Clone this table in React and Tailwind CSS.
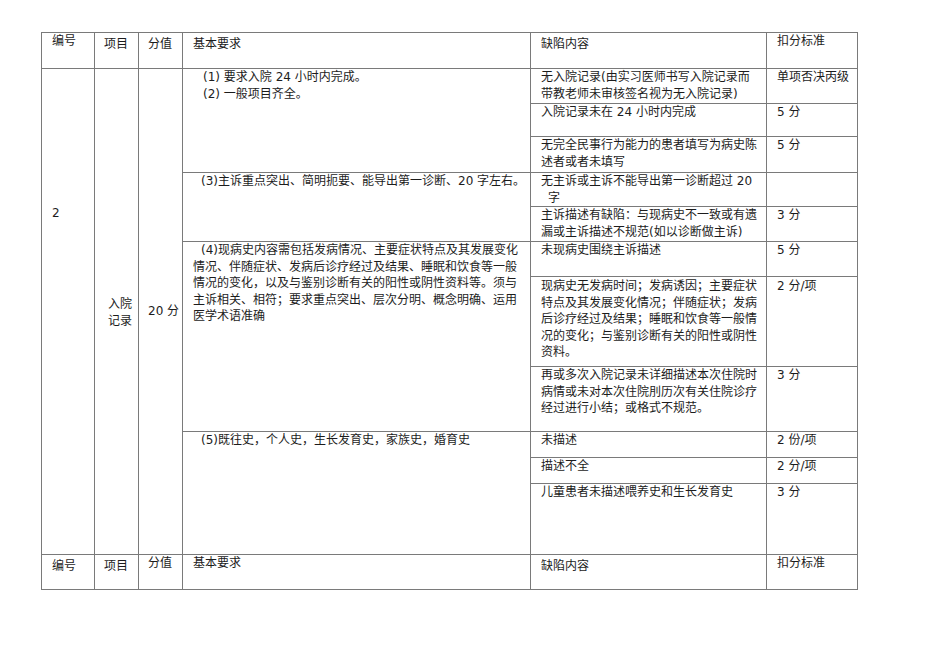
const Cell = ({ className = '', children }) => (
  <div className={`bg-white leading-[16.5px] ${className}`}>{children}</div>
)

const Lines = ({ lines, className = '' }) => (
  <div className={className}>
    {lines.map((l, i) => (
      <div key={i} className="whitespace-nowrap">{l}</div>
    ))}
  </div>
)

export default function App() {
  return (
    <div className="min-h-[672px] w-[950px] bg-white pl-[41px] pt-[32px] font-['DejaVu_Sans','Noto_Sans_CJK_SC',sans-serif] text-[12px] text-[#1c1c1c]">
      <div className="grid w-max grid-cols-[52px_43px_43px_347px_235px_90px] grid-rows-[35px_34px_32px_35px_33px_34px_34px_89px_64px_25px_25px_70px_34px] gap-px bg-[#7a7a7a] p-px">
        {/* header */}
        <Cell className="col-start-1 row-start-1 pl-[10px]">编号</Cell>
        <Cell className="col-start-2 row-start-1 pl-[9px] pt-[3px]">项目</Cell>
        <Cell className="col-start-3 row-start-1 pl-[9px] pt-[3px]">分值</Cell>
        <Cell className="col-start-4 row-start-1 pl-[10px] pt-[3px]">基本要求</Cell>
        <Cell className="col-start-5 row-start-1 pl-[10px] pt-[3px]">缺陷内容</Cell>
        <Cell className="col-start-6 row-start-1 pl-[10px]">扣分标准</Cell>

        {/* left spanning columns */}
        <Cell className="col-start-1 row-start-2 row-span-11 pl-[10px] pt-[136px]">2</Cell>
        <Cell className="col-start-2 row-start-2 row-span-11 flex items-center pl-[13px]">
          <Lines lines={['入院', '记录']} className="pt-[2px]" />
        </Cell>
        <Cell className="col-start-3 row-start-2 row-span-11 flex items-center pl-[9px]">20 分</Cell>

        {/* 基本要求 */}
        <Cell className="col-start-4 row-start-2 row-span-3 pl-[20px]">
          <Lines lines={['(1) 要求入院 24 小时内完成。', '(2) 一般项目齐全。']} />
        </Cell>
        <Cell className="col-start-4 row-start-5 row-span-2 pl-[18px]">(3)主诉重点突出、简明扼要、能导出第一诊断、20 字左右。</Cell>
        <Cell className="col-start-4 row-start-7 row-span-3 pl-[10px]">
          <Lines
            lines={[
              <span className="pl-[8px]">(4)现病史内容需包括发病情况、主要症状特点及其发展变化</span>,
              '情况、伴随症状、发病后诊疗经过及结果、睡眠和饮食等一般',
              '情况的变化，以及与鉴别诊断有关的阳性或阴性资料等。须与',
              '主诉相关、相符；要求重点突出、层次分明、概念明确、运用',
              '医学术语准确',
            ]}
          />
        </Cell>
        <Cell className="col-start-4 row-start-10 row-span-3 pl-[18px]">(5)既往史，个人史，生长发育史，家族史，婚育史</Cell>

        {/* 缺陷内容 / 扣分标准 */}
        <Cell className="col-start-5 row-start-2 pl-[10px]">
          <Lines lines={['无入院记录(由实习医师书写入院记录而', '带教老师未审核签名视为无入院记录)']} />
        </Cell>
        <Cell className="col-start-6 row-start-2 pl-[10px]">单项否决丙级</Cell>

        <Cell className="col-start-5 row-start-3 pl-[10px]">入院记录未在 24 小时内完成</Cell>
        <Cell className="col-start-6 row-start-3 pl-[10px]">5 分</Cell>

        <Cell className="col-start-5 row-start-4 pl-[10px]">
          <Lines lines={['无完全民事行为能力的患者填写为病史陈', '述者或者未填写']} />
        </Cell>
        <Cell className="col-start-6 row-start-4 pl-[10px]">5 分</Cell>

        <Cell className="col-start-5 row-start-5 pl-[10px]">
          <Lines lines={['无主诉或主诉不能导出第一诊断超过 20', <span className="pl-[7px]">字</span>]} />
        </Cell>
        <Cell className="col-start-6 row-start-5" />

        <Cell className="col-start-5 row-start-6 pl-[10px]">
          <Lines lines={['主诉描述有缺陷：与现病史不一致或有遗', '漏或主诉描述不规范(如以诊断做主诉)']} />
        </Cell>
        <Cell className="col-start-6 row-start-6 pl-[10px]">3 分</Cell>

        <Cell className="col-start-5 row-start-7 pl-[10px]">未现病史围绕主诉描述</Cell>
        <Cell className="col-start-6 row-start-7 pl-[10px]">5 分</Cell>

        <Cell className="col-start-5 row-start-8 pl-[10px] pt-px">
          <Lines
            lines={[
              '现病史无发病时间；发病诱因；主要症状',
              '特点及其发展变化情况；伴随症状；发病',
              '后诊疗经过及结果；睡眠和饮食等一般情',
              '况的变化；与鉴别诊断有关的阳性或阴性',
              '资料。',
            ]}
          />
        </Cell>
        <Cell className="col-start-6 row-start-8 pl-[10px] pt-px">2 分/项</Cell>

        <Cell className="col-start-5 row-start-9 pl-[10px]">
          <Lines
            lines={[
              '再或多次入院记录未详细描述本次住院时',
              '病情或未对本次住院刖历次有关住院诊疗',
              '经过进行小结；或格式不规范。',
            ]}
          />
        </Cell>
        <Cell className="col-start-6 row-start-9 pl-[10px]">3 分</Cell>

        <Cell className="col-start-5 row-start-10 pl-[10px]">未描述</Cell>
        <Cell className="col-start-6 row-start-10 pl-[10px]">2 份/项</Cell>

        <Cell className="col-start-5 row-start-11 pl-[10px]">描述不全</Cell>
        <Cell className="col-start-6 row-start-11 pl-[10px]">2 分/项</Cell>

        <Cell className="col-start-5 row-start-12 pl-[10px]">儿童患者未描述喂养史和生长发育史</Cell>
        <Cell className="col-start-6 row-start-12 pl-[10px]">3 分</Cell>

        {/* footer header repeat */}
        <Cell className="col-start-1 row-start-13 pl-[10px] pt-[3px]">编号</Cell>
        <Cell className="col-start-2 row-start-13 pl-[9px] pt-[3px]">项目</Cell>
        <Cell className="col-start-3 row-start-13 pl-[9px]">分值</Cell>
        <Cell className="col-start-4 row-start-13 pl-[10px]">基本要求</Cell>
        <Cell className="col-start-5 row-start-13 pl-[10px] pt-[3px]">缺陷内容</Cell>
        <Cell className="col-start-6 row-start-13 pl-[10px]">扣分标准</Cell>
      </div>
    </div>
  )
}
